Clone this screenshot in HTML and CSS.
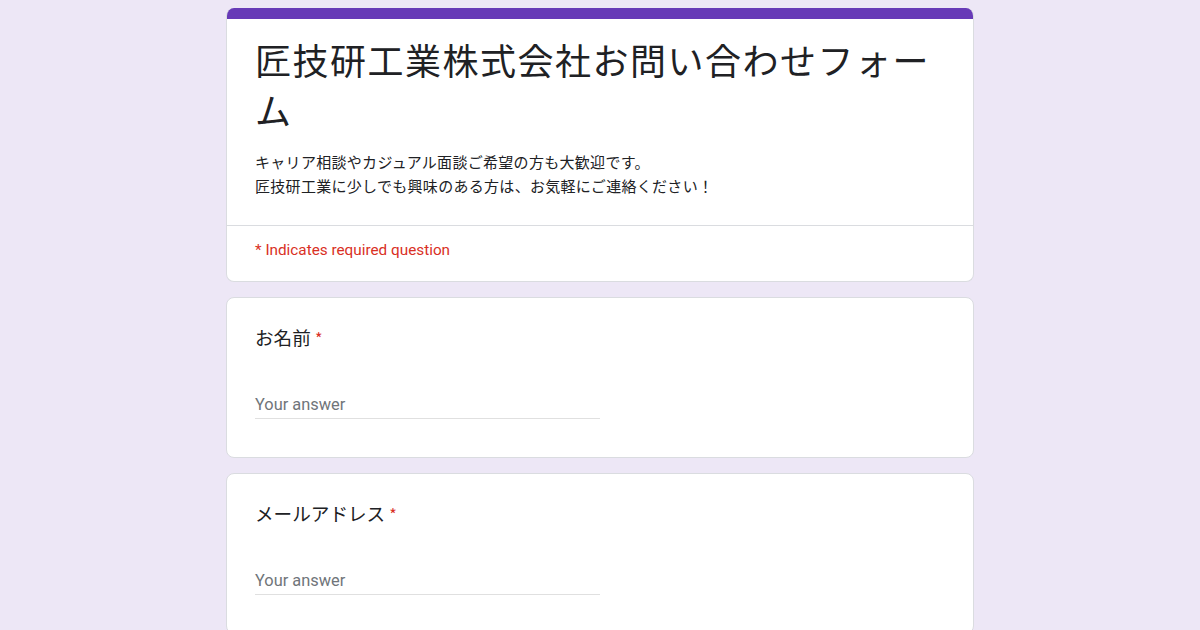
FILE: index.html
```html
<!DOCTYPE html>
<html lang="ja">
<head>
<meta charset="utf-8">
<title>匠技研工業株式会社お問い合わせフォーム</title>
<link rel="stylesheet" href="styles.css">
</head>
<body>
<main class="form">
  <section class="card header-card">
    <div class="accent"></div>
    <div class="header-main">
      <h1 class="title">匠技研工業株式会社お問い合わせフォーム</h1>
      <p class="desc">キャリア相談やカジュアル面談ご希望の方も大歓迎です。<br>匠技研工業に少しでも興味のある方は、お気軽にご連絡ください！</p>
    </div>
    <div class="required-note">* Indicates required question</div>
  </section>

  <section class="card question">
    <div class="q-title">お名前 <span class="star">*</span></div>
    <div class="answer"><span class="placeholder">Your answer</span></div>
  </section>

  <section class="card question">
    <div class="q-title">メールアドレス <span class="star">*</span></div>
    <div class="answer"><span class="placeholder">Your answer</span></div>
  </section>
</main>
</body>
</html>
```

FILE: styles.css
```css
* { box-sizing: border-box; }

html, body {
  margin: 0;
  padding: 0;
}

body {
  background: #ede7f6;
  color: #202124;
  font-family: Roboto, "Noto Sans CJK JP", "Noto Sans", sans-serif;
  height: 630px;
  overflow: hidden;
}

.form {
  width: 748px;
  margin: 8px auto 0;
  display: flex;
  flex-direction: column;
  gap: 15px;
}

.card {
  background: #fff;
  border: 1px solid #dadce0;
  border-radius: 8px;
  overflow: hidden;
}

.header-card {
  border-top: none;
}

.accent {
  height: 11px;
  background: #673ab7;
}

.header-main {
  padding: 15px 28px 27px;
  border-bottom: 1px solid #dadce0;
}

.title {
  margin: 0;
  font-family: "Noto Sans CJK JP", sans-serif;
  font-weight: 400;
  font-size: 36px;
  letter-spacing: 1.5px;
  line-height: 50px;
  color: #202124;
}

.desc {
  margin: 16px 0 0;
  font-family: "Noto Sans CJK JP", sans-serif;
  font-size: 15px;
  letter-spacing: 0.3px;
  line-height: 24px;
  color: #202124;
}

.required-note {
  padding: 12px 28px 19px;
  font-family: Roboto, sans-serif;
  font-size: 15.3px;
  line-height: 24px;
  color: #d93025;
}

.question {
  padding: 25px 28px 38px;
}

.q-title {
  font-family: "Noto Sans CJK JP", sans-serif;
  font-size: 18.6px;
  line-height: 28px;
  color: #202124;
}

.star {
  color: #d93025;
  font-size: 16px;
  line-height: 1;
}

.answer {
  margin-top: 42px;
  width: 345px;
  padding-bottom: 1px;
  border-bottom: 1px solid #e0e0e0;
  line-height: 24px;
}

.placeholder {
  font-family: Roboto, sans-serif;
  font-size: 16.4px;
  color: #70757a;
}
```
